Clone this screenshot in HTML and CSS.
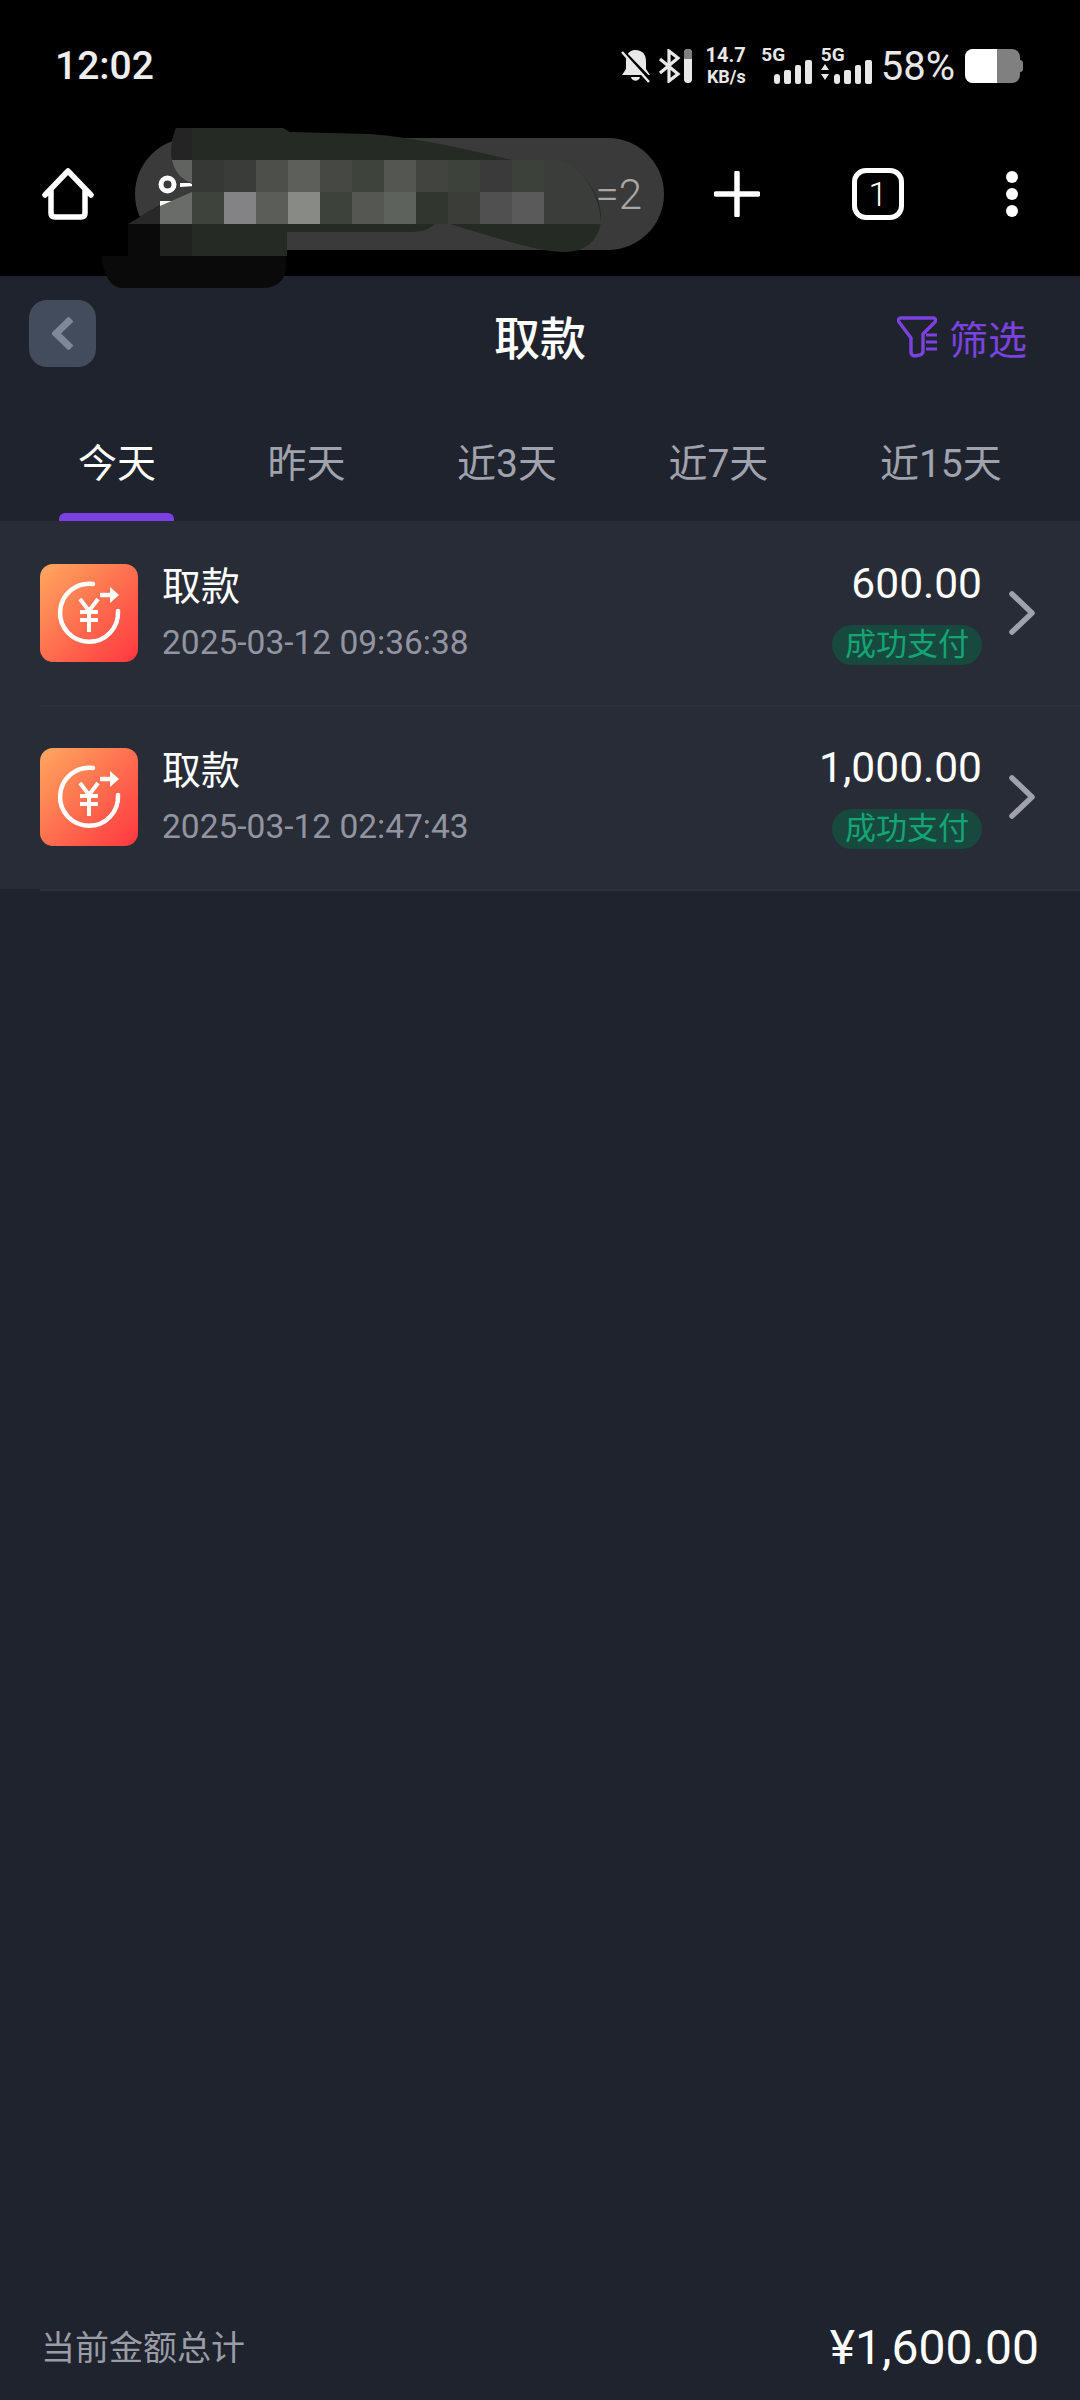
FILE: index.html
```html
<!DOCTYPE html>
<html>
<head>
<meta charset="utf-8">
<title>取款</title>
<link rel="stylesheet" href="styles.css">
</head>
<body>
<div class="top">
	<div class="status">
		<span class="time">12:02</span>
		<div class="status_right">
			<svg class="bell" width="30" height="34" viewBox="0 0 30 34">
				<path d="M14 1C22 1 25 6 25 12V20L29 26H1L5 20V12C5 6 8 1 14 1Z" fill="#e8e8e8"/>
				<path d="M10 28H19C18 33 11 33 10 28Z" fill="#e8e8e8"/>
				<path d="M3 3L30 31" stroke="#000" stroke-width="3"/>
				<path d="M1 3L28 33" stroke="#e8e8e8" stroke-width="2.5"/>
			</svg>
			<svg class="bt" width="23" height="34" viewBox="0 0 23 34">
				<path d="M2 10L20 25L11 32V2L20 9L2 24" fill="none" stroke="#e8e8e8" stroke-width="3.2"/>
			</svg>
			<span class="bt_level"><span class="bt_used"></span></span>
			<div class="net"><b>14.7</b><b class="net_unit">KB/s</b></div>
			<div class="sig sig_first">
				<span class="sig_label">5G</span>
				<svg width="51" height="24" viewBox="0 0 51 24">
					<rect x="13" y="14" width="6" height="10" rx="3" fill="#e8e8e8"/>
					<rect x="23" y="10" width="7" height="14" rx="2" fill="#e8e8e8"/>
					<rect x="34" y="5" width="6" height="19" rx="2" fill="#e8e8e8"/>
					<rect x="44" y="0" width="7" height="24" rx="2" fill="#e8e8e8"/>
				</svg>
			</div>
			<div class="sig">
				<span class="sig_label">5G</span>
				<svg width="51" height="24" viewBox="0 0 51 24">
					<path d="M0 10L4 4L8 10ZM0 14H8L4 20Z" fill="#e8e8e8"/>
					<rect x="13" y="14" width="6" height="10" rx="3" fill="#e8e8e8"/>
					<rect x="23" y="10" width="7" height="14" rx="2" fill="#e8e8e8"/>
					<rect x="34" y="5" width="6" height="19" rx="2" fill="#e8e8e8"/>
					<rect x="44" y="0" width="7" height="24" rx="2" fill="#e8e8e8"/>
				</svg>
			</div>
			<span class="percent">58%</span>
			<span class="battery"><span class="battery_fill"></span><span class="battery_nub"></span></span>
		</div>
	</div>
	<div class="toolbar">
		<svg class="home" width="52" height="52" viewBox="0 0 52 52">
			<path d="M3 27L26 3L49 27M9 22V45Q9 49 13 49H39Q43 49 43 45V22" fill="none" stroke="#fff" stroke-width="5.5" stroke-linecap="round" stroke-linejoin="round"/>
		</svg>
		<div class="url"><span class="url_text">=2</span></div>
		<svg class="plus" width="46" height="46" viewBox="0 0 46 46">
			<path d="M23 2V44M2 23H44" stroke="#fff" stroke-width="5.5" stroke-linecap="round"/>
		</svg>
		<div class="tabs_btn">1</div>
		<svg class="dots" width="12" height="46" viewBox="0 0 12 46">
			<circle cx="6" cy="6" r="6" fill="#fff"/>
			<circle cx="6" cy="23" r="6" fill="#fff"/>
			<circle cx="6" cy="40" r="6" fill="#fff"/>
		</svg>
	</div>
	<!-- the scribble and mosaic painted over the address -->
	<svg class="redact" width="1080" height="300" viewBox="0 0 1080 300">
		<circle cx="167.500" cy="184.500" r="6.500" fill="none" stroke="#fff" stroke-width="5"/>
		<path d="M180 183H190L195 186L180 187Z" fill="#fff"/>
		<rect x="160" y="201" width="13" height="5" fill="#fff"/>
		<path d="M102 256H286V268Q284 288 262 288H122Q108 288 102 262Z" fill="#0a0a0a"/>
		<path d="M128 224L160 205V256H128Z" fill="#0a0a0a"/>
		<path d="M128 224L160 205V224Z" fill="#282828"/>
		<path d="M176 128H283L290 132L370 134C420 138 470 150 512 160L560 162C585 170 600 195 601 215C602 235 590 252 565 252C540 252 510 242 450 224L435 224C425 232 420 232 400 232H287V256H160V224H192V160H172C170 150 172 138 176 128Z" fill="#252a24"/>
		<path d="M176 128H192V160H172C170 150 172 138 176 128Z" fill="#232423"/>
		<rect x="160" y="224" width="32" height="32" fill="#1f221f"/>
		<path d="M172 160H192V183Q176 178 172 160Z" fill="#616361"/>
		<path d="M160 206L192 192V224H160Z" fill="#6a6c69"/>
		<rect x="192" y="160" width="32" height="32" fill="#363835"/>
		<rect x="224" y="160" width="32" height="32" fill="#3a3c39"/>
		<rect x="256" y="160" width="32" height="32" fill="#4d4f4b"/>
		<rect x="288" y="160" width="32" height="32" fill="#5c5f5a"/>
		<rect x="320" y="160" width="32" height="32" fill="#464844"/>
		<rect x="352" y="160" width="32" height="32" fill="#3e433c"/>
		<rect x="384" y="160" width="32" height="32" fill="#535651"/>
		<rect x="416" y="160" width="32" height="32" fill="#424440"/>
		<rect x="448" y="160" width="32" height="32" fill="#3d433b"/>
		<rect x="480" y="160" width="32" height="32" fill="#3a3a3a"/>
		<rect x="512" y="160" width="32" height="32" fill="#3c423a"/>
		<rect x="192" y="192" width="32" height="32" fill="#3e443c"/>
		<rect x="224" y="192" width="32" height="32" fill="#838285"/>
		<rect x="256" y="192" width="32" height="32" fill="#5b5d59"/>
		<rect x="288" y="192" width="32" height="32" fill="#878a85"/>
		<rect x="320" y="192" width="32" height="32" fill="#3d423b"/>
		<rect x="352" y="192" width="32" height="32" fill="#555752"/>
		<rect x="384" y="192" width="32" height="32" fill="#5d635c"/>
		<rect x="416" y="192" width="32" height="32" fill="#31372f"/>
		<rect x="448" y="192" width="32" height="32" fill="#3b3d39"/>
		<rect x="480" y="192" width="32" height="32" fill="#505050"/>
		<rect x="512" y="192" width="32" height="32" fill="#5a5a5a"/>
		<path d="M544 160H560C585 170 600 195 601 224H544Z" fill="#3b3d3a"/>
	</svg>
</div>

<div class="head">
	<div class="title_row">
		<div class="back">
			<svg width="21" height="33" viewBox="0 0 21 33"><path d="M19 2L4 16.500L19 31" fill="none" stroke="#7f8899" stroke-width="7"/></svg>
		</div>
		<div class="title">取款</div>
		<div class="filter">
			<svg width="40" height="42" viewBox="0 0 40 42">
				<path d="M3 2H37Q40 3 38 6L26 18V35Q26 38 23 39L17 40Q14 39 14 36V22L2 6Q0 3 3 2Z" fill="none" stroke="#7b42e0" stroke-width="3.4" stroke-linejoin="round"/>
				<path d="M29 19H40M29 26H40M29 33H40" stroke="#7b42e0" stroke-width="3"/>
			</svg>
			<span>筛选</span>
		</div>
	</div>
	<div class="tabs">
		<div class="tab active">今天</div>
		<div class="tab">昨天</div>
		<div class="tab">近3天</div>
		<div class="tab">近7天</div>
		<div class="tab">近15天</div>
	</div>
</div>

<div class="list">
	<div class="row">
		<div class="row_icon">
			<svg width="98" height="98" viewBox="0 0 98 98">
				<path d="M53 20A29 29 0 1 0 78 47" fill="none" stroke="#fff" stroke-width="4.500" stroke-linecap="round"/>
				<path d="M60 31H71" stroke="#fff" stroke-width="4.500"/>
				<path d="M70 23L79 31L70 39Z" fill="#fff"/>
				<path d="M40 35L49 47L58 35M40 48H58M40 56H58M49 47V68" fill="none" stroke="#fff" stroke-width="4"/>
			</svg>
		</div>
		<div class="row_text">
			<div class="row_title">取款</div>
			<div class="row_date">2025-03-12 09:36:38</div>
		</div>
		<div class="row_right">
			<div class="amount">600.00</div>
			<div class="badge">成功支付</div>
		</div>
		<svg class="chevron" width="26" height="44" viewBox="0 0 26 44"><path d="M3 3L23 22L3 41" fill="none" stroke="#9fa2ad" stroke-width="5.500" stroke-linecap="round" stroke-linejoin="round"/></svg>
	</div>
	<div class="row">
		<div class="row_icon">
			<svg width="98" height="98" viewBox="0 0 98 98">
				<path d="M53 20A29 29 0 1 0 78 47" fill="none" stroke="#fff" stroke-width="4.500" stroke-linecap="round"/>
				<path d="M60 31H71" stroke="#fff" stroke-width="4.500"/>
				<path d="M70 23L79 31L70 39Z" fill="#fff"/>
				<path d="M40 35L49 47L58 35M40 48H58M40 56H58M49 47V68" fill="none" stroke="#fff" stroke-width="4"/>
			</svg>
		</div>
		<div class="row_text">
			<div class="row_title">取款</div>
			<div class="row_date">2025-03-12 02:47:43</div>
		</div>
		<div class="row_right">
			<div class="amount">1,000.00</div>
			<div class="badge">成功支付</div>
		</div>
		<svg class="chevron" width="26" height="44" viewBox="0 0 26 44"><path d="M3 3L23 22L3 41" fill="none" stroke="#9fa2ad" stroke-width="5.500" stroke-linecap="round" stroke-linejoin="round"/></svg>
	</div>
</div>

<div class="total">
	<span class="total_label">当前金额总计</span>
	<span class="total_value">¥1,600.00</span>
</div>
</body>
</html>
```

FILE: styles.css
```css
html, body{
	margin:0;
	padding:0;
	height:100%;
}
body{
	display:flex;
	flex-direction:column;
	height:2400px;
	background-color:#1f232d;
	color:#fff;
	font-family:Roboto, "Noto Sans CJK SC", sans-serif;
	overflow:hidden;
}
/* black phone + browser bars */
.top{
	position:relative;
	height:276px;
	flex-shrink:0;
	background-color:#000;
}
.status{
	display:flex;
	align-items:center;
	justify-content:space-between;
	height:132px;
	padding-left:55px;
	padding-right:56px;
	box-sizing:border-box;
}
.time{
	font-size:39px;
	font-weight:500;
	color:#eee;
}
.status_right{
	display:flex;
	align-items:center;
	color:#e8e8e8;
}
.bt{
	margin-left:7px;
}
.bt_level{
	display:block;
	width:8px;
	height:34px;
	margin-left:3px;
	border-radius:4px;
	background-color:#e8e8e8;
	overflow:hidden;
}
.bt_used{
	display:block;
	height:10px;
	background-color:#808080;
}
.net{
	display:flex;
	flex-direction:column;
	align-items:flex-end;
	margin-left:14px;
	font-size:20px;
	line-height:22px;
}
.net_unit{
	font-size:18px;
}
.sig{
	display:flex;
	flex-direction:column;
	margin-left:8.500px;
}
.sig_first{
	margin-left:15.500px;
}
.sig_label{
	font-size:19px;
	font-weight:700;
	line-height:14px;
}
.sig svg{
	margin-top:-2px;
	display:block;
}
.percent{
	margin-left:9px;
	font-size:40px;
	color:#e8e8e8;
}
.battery{
	display:block;
	position:relative;
	width:55px;
	height:34px;
	margin-left:10px;
	margin-right:4px;
	border-radius:8px;
	background-color:#808080;
}
.battery_fill{
	display:block;
	width:32px;
	height:34px;
	border-radius:8px 0 0 8px;
	background-color:#fff;
}
.battery_nub{
	position:absolute;
	right:-3px;
	top:11px;
	width:3px;
	height:12px;
	border-radius:0 3px 3px 0;
	background-color:#808080;
}
.toolbar{
	display:flex;
	align-items:center;
	height:112px;
	margin-top:6px;
}
.home{
	margin-left:42px;
}
.url{
	display:flex;
	align-items:center;
	justify-content:flex-end;
	width:529px;
	height:112px;
	margin-left:41px;
	padding-right:22px;
	box-sizing:border-box;
	border-radius:56px;
	background-color:#3a3a3a;
}
.url_text{
	font-size:42px;
	font-weight:300;
	color:#a8a8a8;
}
.plus{
	margin-left:50px;
}
.tabs_btn{
	display:flex;
	align-items:center;
	justify-content:center;
	width:52px;
	height:52px;
	margin-left:92px;
	box-sizing:border-box;
	border:5px solid #fff;
	border-radius:14px;
	font-size:34px;
	font-weight:300;
}
.dots{
	margin-left:102px;
}
.redact{
	position:absolute;
	left:0;
	top:0;
	z-index:1;
	pointer-events:none;
}
.head{
	flex-shrink:0;
	height:245px;
}
.title_row{
	display:grid;
	grid-template-columns:1fr auto 1fr;
	align-items:center;
	height:68px;
	margin-top:24px;
	padding-left:29px;
	padding-right:29px;
}
.back{
	display:flex;
	align-items:center;
	justify-content:center;
	align-self:start;
	width:67px;
	height:67px;
	border-radius:18px;
	background-color:#434c5c;
}
.title{
	margin-top:5px;
	font-size:46px;
	font-weight:500;
	line-height:68px;
}
.filter{
	display:flex;
	align-items:center;
	justify-content:flex-end;
	gap:12px;
	margin-right:24px;
	color:#7b42e0;
	font-size:39px;
}
.tabs{
	display:flex;
	gap:111.500px;
	margin-top:69px;
	padding-left:78px;
}
.tab{
	position:relative;
	padding-bottom:30px;
	font-size:39px;
	line-height:54px;
	white-space:nowrap;
	color:#a0a3ad;
}
.tab.active{
	color:#fff;
}
.tab.active::after{
	content:"";
	position:absolute;
	left:-19px;
	bottom:0;
	width:115px;
	height:8px;
	border-radius:6px 6px 0 0;
	background-color:#7c3fe6;
}
.list{
	flex-shrink:0;
	background-color:#282c36;
}
.row{
	display:flex;
	align-items:flex-start;
	height:184px;
	margin-left:40px;
	padding-top:43px;
	padding-right:45px;
	box-sizing:border-box;
	box-shadow:0 2px 0 #2d303b;
}
.row_icon{
	width:98px;
	height:98px;
	flex-shrink:0;
	border-radius:13px;
	background:linear-gradient(135deg, #ffa85e, #ff3640);
}
.row_icon svg{
	display:block;
}
.row_text{
	margin-left:24px;
}
.row_title{
	margin-top:-2px;
	font-size:39px;
	line-height:50px;
}
.row_date{
	margin-top:11px;
	font-size:33.500px;
	line-height:40px;
	color:#9295a1;
}
.row_right{
	display:flex;
	flex-direction:column;
	align-items:flex-end;
	margin-left:auto;
	margin-top:-5px;
}
.amount{
	font-size:42.500px;
	line-height:50px;
}
.badge{
	height:40px;
	margin-top:16px;
	padding-left:13px;
	padding-right:13px;
	border-radius:20px;
	background-color:#17493f;
	color:#14a574;
	font-size:31px;
	line-height:40px;
}
.chevron{
	flex-shrink:0;
	margin-top:27px;
	margin-left:27px;
}
.total{
	display:flex;
	align-items:center;
	justify-content:space-between;
	height:102px;
	margin-top:auto;
	margin-bottom:2px;
	padding-left:41px;
	padding-right:41px;
}
.total_label{
	margin-bottom:3px;
	font-size:34px;
	color:#9a9da6;
}
.total_value{
	font-size:48px;
}
```
